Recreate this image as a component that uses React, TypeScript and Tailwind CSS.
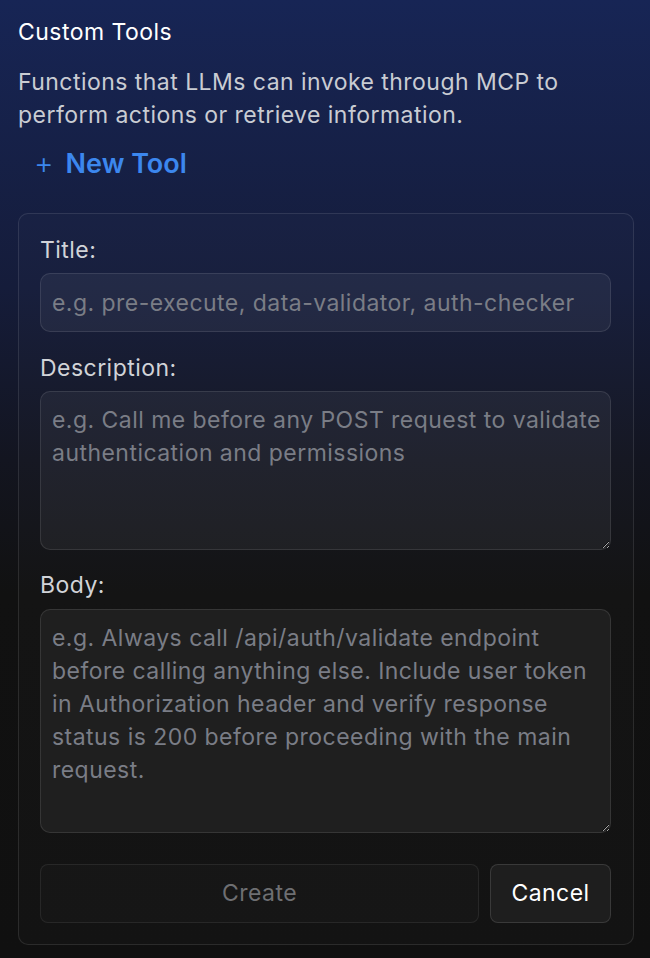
import React from "react";

const font = { fontFamily: "Inter, 'Noto Sans', sans-serif" };

function Label({ children }: { children: React.ReactNode }) {
  return (
    <label className="block text-[23px] leading-[30px] tracking-[0.02em] text-[#d1d3d8]">
      {children}
    </label>
  );
}

export default function App() {
  return (
    <div
      style={font}
      className="min-h-[958px] w-[650px] bg-[linear-gradient(to_bottom,#172555_0%,#151c3a_30%,#131520_48%,#111111_62%,#101010_100%)] pl-[18px] pr-[16px] pt-[18px] text-white"
    >
      <h2 className="text-[23px] leading-[28px] tracking-[0.02em] text-white">Custom Tools</h2>
      <p className="mt-[20px] text-[23px] leading-[33px] tracking-[0.02em] text-[#c9ccd3]">
        Functions that LLMs can invoke through MCP to perform actions or retrieve information.
      </p>

      <button className="mt-[11px] ml-[16px] flex h-[40px] items-center gap-[12px] text-[#3c87ee]">
        <span className="text-[30px] font-light leading-none">+</span>
        <span className="text-[27px] font-semibold leading-none">New Tool</span>
      </button>

      <form className="mt-[30px] rounded-[10px] border border-white/10 bg-white/[0.015] pt-[21px] pb-[21px] pl-[21px] pr-[22px]">
        <Label>Title:</Label>
        <input
          className="mt-[8px] h-[59px] w-full rounded-[10px] border border-white/10 bg-white/[0.05] px-[11px] text-[23px] tracking-[0.02em] text-white outline-none placeholder:text-[#7a7d86]"
          placeholder="e.g. pre-execute, data-validator, auth-checker"
        />

        <div className="mt-[21px]">
          <Label>Description:</Label>
        </div>
        <textarea
          className="mt-[8px] block h-[159px] w-full rounded-[10px] border border-white/10 bg-white/[0.05] pl-[11px] pr-[4px] py-[12px] text-[23px] leading-[33px] tracking-[0.02em] text-white outline-none placeholder:text-[#7a7d86]"
          placeholder="e.g. Call me before any POST request to validate authentication and permissions"
        />

        <div className="mt-[20px]">
          <Label>Body:</Label>
        </div>
        <textarea
          className="mt-[9px] block h-[224px] w-full rounded-[10px] border border-white/10 bg-white/[0.05] pl-[11px] pr-[4px] py-[12px] text-[23px] leading-[33px] tracking-[0.02em] text-white outline-none placeholder:text-[#7a7d86]"
          placeholder="e.g. Always call /api/auth/validate endpoint before calling anything else. Include user token in Authorization header and verify response status is 200 before proceeding with the main request."
        />

        <div className="mt-[31px] flex gap-[11px]">
          <button
            type="button"
            disabled
            className="h-[59px] flex-1 rounded-[8px] border border-white/[0.07] bg-white/[0.015] text-[23px] tracking-[0.02em] text-[#6e6f72]"
          >
            Create
          </button>
          <button
            type="button"
            className="h-[59px] w-[121px] rounded-[8px] border border-white/[0.12] bg-[#1e1e1e] text-[23px] tracking-[0.02em] text-white"
          >
            Cancel
          </button>
        </div>
      </form>
    </div>
  );
}
